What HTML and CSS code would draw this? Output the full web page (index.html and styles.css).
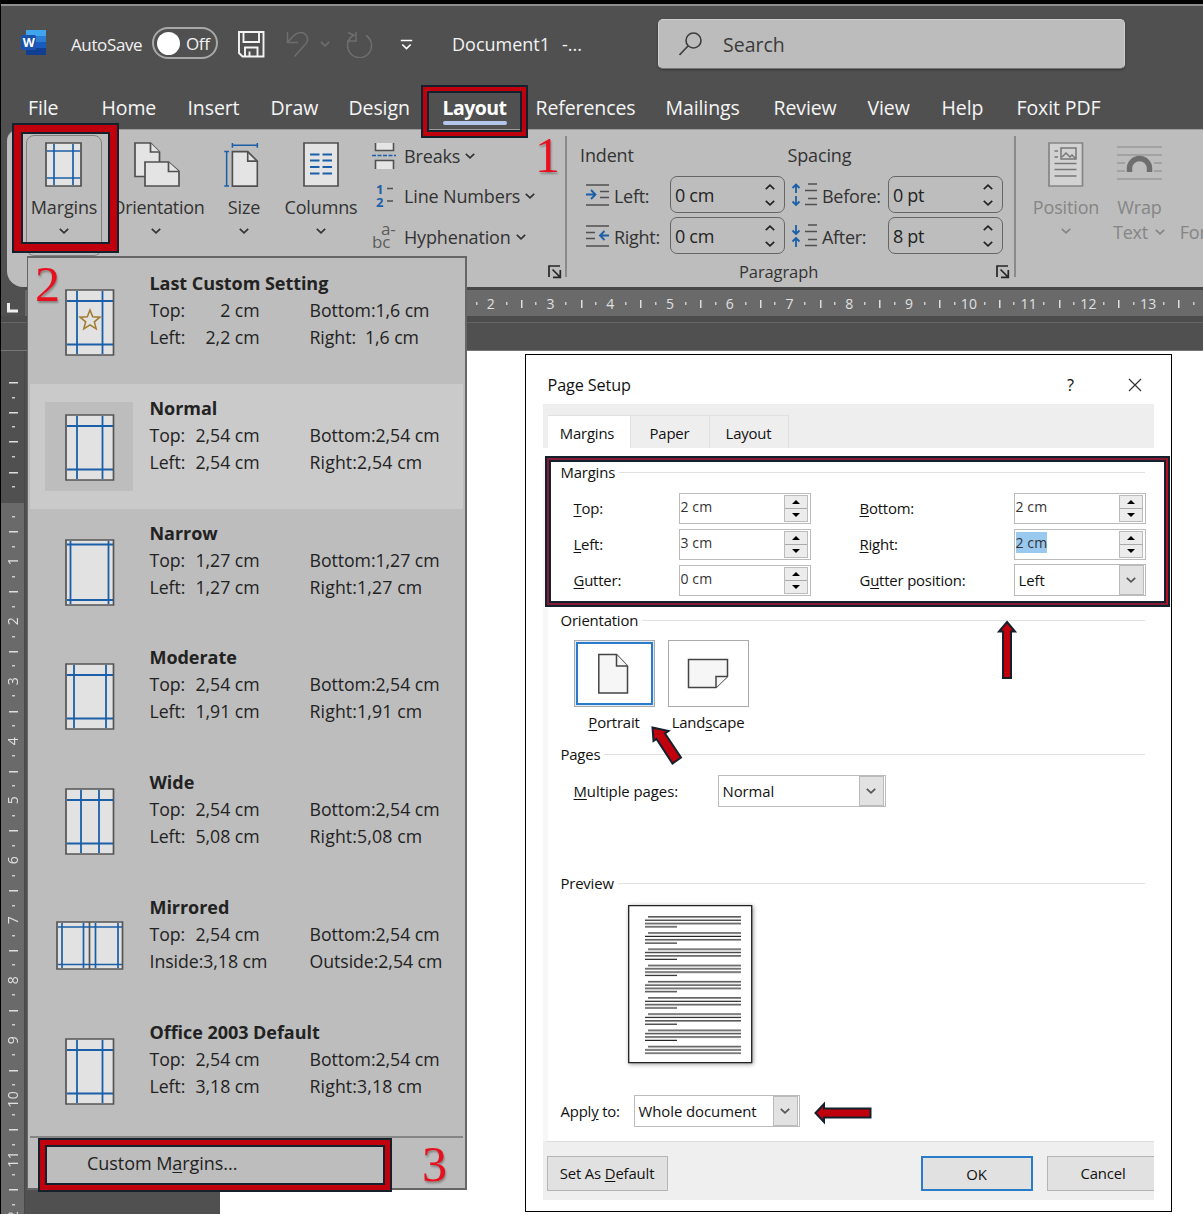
FILE: index.html
```html
<!DOCTYPE html>
<html lang="en">
<head>
<meta charset="utf-8">
<title>Document1 - Word</title>
<link rel="stylesheet" href="styles.css">
</head>
<body>
<svg class="defs" width="0" height="0">
  <defs>
    <symbol id="chev" viewBox="0 0 12 8"><path d="M1.8 1.8 6 5.8l4.200-4" fill="none" stroke="currentColor" stroke-width="1.7"/></symbol>
    <symbol id="up" viewBox="0 0 12 8"><path d="M1.800 6.200 6 2.200l4.200 4" fill="none" stroke="currentColor" stroke-width="1.700"/></symbol>
    <symbol id="launch" viewBox="0 0 14 14"><path d="M1 12V1h11M4.500 4.500 12 12M12.300 5v7.300H5" fill="none" stroke="#262626" stroke-width="1.700"/></symbol>
    <symbol id="standard" viewBox="0 0 50 67"><path d="M1 1h47.500v65H1z" fill="#e2e2e2" stroke="#555" stroke-width="1.700"/><path d="M12 2v63M37.500 2v63M2 12h46M2 55.500h46" stroke="#1a5fa8" stroke-width="1.800"/></symbol>
  </defs>
</svg>
<div class="app">
  <header class="titlebar">
    <svg class="word" width="28" height="28" viewBox="0 0 28 28"><path d="M5 1h20v7H5z" fill="#41a5ee"/><path d="M5 7h20v7H5z" fill="#2b7cd3"/><path d="M5 13h20v7H5z" fill="#185abd"/><path d="M5 19h20v7H5z" fill="#103f91"/><rect x="0" y="6" width="15" height="15" rx="1.500" fill="#1a52b0"/><text x="7.500" y="18" text-anchor="middle" class="w">W</text></svg>
    <span class="autosave">AutoSave</span>
    <span class="toggle"><i></i>Off</span>
    <svg width="28" height="28" viewBox="0 0 28 28" fill="none" stroke="#f4f4f4" stroke-width="1.900"><path d="M1 2h24.500v24.500H4.500L1 23zM5.500 2.500V12H21V2.500M7 26.500v-9h12.500v9M11.500 26.500v-5"/></svg>
    <svg width="26" height="28" viewBox="0 0 26 28" fill="none" stroke="#6e6e6e" stroke-width="1.500"><path d="M1.500 2v10.500H12M1.500 12.500C7 6 10 2.500 14.500 2.500c6 0 9 6.500 5.500 11L8.500 26.500"/></svg>
    <svg class="dim" width="12" height="8"><use href="#chev"/></svg>
    <svg width="28" height="28" viewBox="0 0 28 28" fill="none" stroke="#6e6e6e" stroke-width="1.500"><path d="M9 2v9H0M19 5.500a12 12 0 1 1-12-.500L1 2.500"/></svg>
    <svg width="13" height="13" viewBox="0 0 13 13" fill="none" stroke="#fff" stroke-width="1.700"><path d="M.8 2.500h11.400M2.300 6.500 6.500 10.500l4.200-4"/></svg>
    <span class="doc">Document1</span>
    <span class="doc2">-...</span>
    <div class="search">
      <svg width="26" height="26" viewBox="0 0 26 26" fill="none" stroke="#3c3c3c" stroke-width="1.600"><circle cx="14.500" cy="9.500" r="7.500"/><path d="m9 15-8.500 9"/></svg>
      <span>Search</span>
    </div>
  </header>
  <nav class="tabs">
    <span>File</span><span>Home</span><span>Insert</span><span>Draw</span><span>Design</span><b>Layout</b><span>References</span><span>Mailings</span><span>Review</span><span>View</span><span>Help</span><span>Foxit PDF</span>
  </nav>

  <section class="ribbon">
    <div class="big margins">
      <svg width="38" height="46" viewBox="0 0 38 46"><path d="M1 1h35v43H1z" fill="#e4e4e4" stroke="#505050" stroke-width="1.700"/><path d="M9 2v41M28 2v41M2 9h33M2 36h33" stroke="#1a5fa8" stroke-width="1.700"/></svg>
      <span>Margins</span><svg class="cv" width="12" height="8"><use href="#chev"/></svg>
    </div>
    <div class="big orient">
      <svg width="46" height="46" viewBox="0 0 46 46" fill="#e4e4e4" stroke="#505050" stroke-width="1.700"><path d="M1 1h15.500l9 9v24.500H1z"/><path d="M16.500 1v9h9"/><path d="M11 20h23.500L45 29.500V44H11z"/><path d="M34.500 20v9.500H45"/></svg>
      <span>Orientation</span><svg class="cv" width="12" height="8"><use href="#chev"/></svg>
    </div>
    <div class="big size">
      <svg width="37" height="48" viewBox="0 0 37 48"><path d="M9 10h16l10 10v26H9z" fill="#e4e4e4" stroke="#505050" stroke-width="1.700"/><path d="M25 10v10h10" fill="none" stroke="#505050" stroke-width="1.700"/><path d="M9 3.500h26M9 1v5M35 1v5M3 10v36M.5 10h5M.5 46h5" stroke="#1a5fa8" stroke-width="1.600" fill="none"/></svg>
      <span>Size</span><svg class="cv" width="12" height="8"><use href="#chev"/></svg>
    </div>
    <div class="big cols">
      <svg width="36" height="46" viewBox="0 0 36 46"><path d="M1 1h34v43H1z" fill="#e4e4e4" stroke="#505050" stroke-width="1.700"/><path d="M7 12.500h9.500m3 0H29M7 18.500h9.500m3 0H29M7 25h9.500m3 0H29M7 31.500h9.500m3 0H29" stroke="#1a5fa8" stroke-width="1.800"/></svg>
      <span>Columns</span><svg class="cv" width="12" height="8"><use href="#chev"/></svg>
    </div>
    <div class="smalls">
      <div><svg width="25" height="26" viewBox="0 0 25 26"><path d="M3.500 0v7.500h18V0M3.500 26v-8.500h18V26" fill="#e4e4e4" stroke="#505050" stroke-width="1.600"/><path d="M0 12.500h24" stroke="#1a5fa8" stroke-width="1.600" stroke-dasharray="4 1.500"/></svg><span>Breaks</span><svg class="cv" width="12" height="8"><use href="#chev"/></svg></div>
      <div><svg width="25" height="26" viewBox="0 0 25 26"><text x="4" y="11" class="num">1</text><text x="4" y="24" class="num">2</text><path d="M15 5.500h6M15 18h6" stroke="#505050" stroke-width="1.500"/></svg><span>Line Numbers</span><svg class="cv" width="12" height="8"><use href="#chev"/></svg></div>
      <div><svg width="25" height="28" viewBox="0 0 25 28"><text x="9" y="12" class="abc">a-</text><text x="0" y="25" class="abc">bc</text></svg><span>Hyphenation</span><svg class="cv" width="12" height="8"><use href="#chev"/></svg></div>
      <svg class="corner" width="14" height="14"><use href="#launch"/></svg>
    </div>
    <div class="para">
      <div class="prow head"><span>Indent</span><span class="sp">Spacing</span></div>
      <div class="prow">
        <svg width="24" height="22" viewBox="0 0 24 22"><path d="M0 1h23M14 7.500h9M14 13.500h9M0 21h23" stroke="#505050" stroke-width="1.500"/><path d="M0 10.500h9M5 6l4.500 4.500L5 15" stroke="#1a5fa8" stroke-width="1.800" fill="none"/></svg>
        <label>Left:</label><div class="spin">0 cm<i><svg width="12" height="8"><use href="#up"/></svg><svg width="12" height="8"><use href="#chev"/></svg></i></div>
        <svg class="s2" width="28" height="24" viewBox="0 0 28 24"><path d="M5 10V1M1.500 5 5 1.500 8.500 5M5 13v9M1.500 18.500 5 22l3.500-3.500" stroke="#1a5fa8" stroke-width="1.800" fill="none"/><path d="M17 1h9M14 7.500h12M17 15.500h9M14 21.500h12" stroke="#505050" stroke-width="1.500"/></svg>
        <label class="l2">Before:</label><div class="spin">0 pt<i><svg width="12" height="8"><use href="#up"/></svg><svg width="12" height="8"><use href="#chev"/></svg></i></div>
      </div>
      <div class="prow">
        <svg width="24" height="22" viewBox="0 0 24 22"><path d="M0 1h23M0 7.500h9M0 13.500h9M0 21h23" stroke="#505050" stroke-width="1.500"/><path d="M23 10.500h-9M18.500 6 14 10.500l4.500 4.500" stroke="#1a5fa8" stroke-width="1.800" fill="none"/></svg>
        <label>Right:</label><div class="spin">0 cm<i><svg width="12" height="8"><use href="#up"/></svg><svg width="12" height="8"><use href="#chev"/></svg></i></div>
        <svg class="s2" width="28" height="24" viewBox="0 0 28 24"><path d="M5 1v9M1.500 6.500 5 10l3.500-3.500M5 23v-9M1.500 17.500 5 14l3.500 3.500" stroke="#1a5fa8" stroke-width="1.800" fill="none"/><path d="M17 1h9M14 7.500h12M17 15.500h9M14 21.500h12" stroke="#505050" stroke-width="1.500"/></svg>
        <label class="l2">After:</label><div class="spin">8 pt<i><svg width="12" height="8"><use href="#up"/></svg><svg width="12" height="8"><use href="#chev"/></svg></i></div>
      </div>
      <div class="caption"><span>Paragraph</span><svg width="14" height="14"><use href="#launch"/></svg></div>
    </div>
    <div class="big off pos">
      <svg width="36" height="46" viewBox="0 0 36 46"><path d="M1 1h33.500v43H1z" fill="#d2d2d2" stroke="#858585" stroke-width="1.700"/><path d="M13 6h15v11H13zM14 15l4-4 4 4 2-2 3 3M6.500 9H10M6.500 15H10M6.500 21.500h22M6.500 27.500h22M6.500 34h22" fill="none" stroke="#777" stroke-width="1.500"/></svg>
      <span>Position</span><svg class="cv" width="12" height="8"><use href="#chev"/></svg>
    </div>
    <div class="big off wrap">
      <svg width="46" height="46" viewBox="0 0 46 46"><path d="M0 5h45M0 13h45M0 21h8M37 21h8M0 29h8M37 29h8M0 37h45" stroke="#999" stroke-width="1.500"/><path d="M12.500 30v-3.500a10 10 0 0 1 20 0V30" fill="#bdbdbd" stroke="#6e6e6e" stroke-width="5.500"/></svg>
      <span>Wrap</span><span class="ln2">Text <svg width="12" height="8"><use href="#chev"/></svg></span>
    </div>
    <div class="big off fwd">
      <svg width="20" height="46" viewBox="0 0 20 46"><path d="M1 1h18v30H1z" fill="#c8c8c8" stroke="#999" stroke-width="1.500"/></svg>
      <span class="bring">Bring</span><span class="ln2">Forward</span>
    </div>
  </section>

  <div class="hruler"><i>2</i><i>3</i><i>4</i><i>5</i><i>6</i><i>7</i><i>8</i><i>9</i><i>10</i><i>11</i><i>12</i><i>13</i><i></i></div>
  <div class="strip"></div>
  <main class="work">
    <div class="vruler"><i class="neg part"></i><i class="neg"></i><i class="zero"></i><i><u>1</u></i><i><u>2</u></i><i><u>3</u></i><i><u>4</u></i><i><u>5</u></i><i><u>6</u></i><i><u>7</u></i><i><u>8</u></i><i><u>9</u></i><i><u>10</u></i><i><u>11</u></i><i><u>12</u></i></div>
    <div class="canvas"></div>
    <div class="sheet"></div>
  </main>

  <svg class="tabstop" width="12" height="12" viewBox="0 0 12 12"><path d="M2.500 0v8H12" fill="none" stroke="#eee" stroke-width="3"/></svg>

  <div class="menu">
    <div class="item"><svg class="ic" width="50" height="67" viewBox="0 0 50 67"><use href="#standard"/><path d="m25 21 2.700 6.800 7.300.400-5.700 4.600 1.900 7.100-6.200-4-6.200 4 1.900-7.100-5.700-4.600 7.300-.400z" fill="none" stroke="#a07a2c" stroke-width="1.500"/></svg>
      <h4>Last Custom Setting</h4><p><span>Top:</span><span>2 cm</span></p><p>Bottom:1,6 cm</p><p><span>Left:</span><span>2,2 cm</span></p><p>Right:<em>1,6 cm</em></p></div>
    <div class="item on"><svg class="ic" width="50" height="67"><use href="#standard"/></svg>
      <h4>Normal</h4><p><span>Top:</span><span>2,54 cm</span></p><p>Bottom:2,54 cm</p><p><span>Left:</span><span>2,54 cm</span></p><p class="r">Right:2,54 cm</p></div>
    <div class="item"><svg class="ic" width="50" height="67" viewBox="0 0 50 67"><path d="M1 1h47.500v65H1z" fill="#e2e2e2" stroke="#555" stroke-width="1.700"/><path d="M5.500 2v63M43.500 2v63M2 5.500h46M2 61h46" stroke="#1a5fa8" stroke-width="1.800"/></svg>
      <h4>Narrow</h4><p><span>Top:</span><span>1,27 cm</span></p><p>Bottom:1,27 cm</p><p><span>Left:</span><span>1,27 cm</span></p><p class="r">Right:1,27 cm</p></div>
    <div class="item"><svg class="ic" width="50" height="67" viewBox="0 0 50 67"><path d="M1 1h47.500v65H1z" fill="#e2e2e2" stroke="#555" stroke-width="1.700"/><path d="M9 2v63M41 2v63M2 12h46M2 55.500h46" stroke="#1a5fa8" stroke-width="1.800"/></svg>
      <h4>Moderate</h4><p><span>Top:</span><span>2,54 cm</span></p><p>Bottom:2,54 cm</p><p><span>Left:</span><span>1,91 cm</span></p><p class="r">Right:1,91 cm</p></div>
    <div class="item"><svg class="ic" width="50" height="67" viewBox="0 0 50 67"><path d="M1 1h47.500v65H1z" fill="#e2e2e2" stroke="#555" stroke-width="1.700"/><path d="M16 2v63M34 2v63M2 12h46M2 55.500h46" stroke="#1a5fa8" stroke-width="1.800"/></svg>
      <h4>Wide</h4><p><span>Top:</span><span>2,54 cm</span></p><p>Bottom:2,54 cm</p><p><span>Left:</span><span>5,08 cm</span></p><p class="r">Right:5,08 cm</p></div>
    <div class="item"><svg class="ic wide" width="68" height="49" viewBox="0 0 68 49"><path d="M1 1h65.500v47H1zM33.500 1v47" fill="#e2e2e2" stroke="#555" stroke-width="1.700"/><path d="M6 2v45M27.500 2v45M39.500 2v45M62 2v45M2 6h64M2 43.500h64" stroke="#1a5fa8" stroke-width="1.700"/></svg>
      <h4>Mirrored</h4><p><span>Top:</span><span>2,54 cm</span></p><p>Bottom:2,54 cm</p><p>Inside:3,18 cm</p><p>Outside:2,54 cm</p></div>
    <div class="item"><svg class="ic" width="50" height="67"><use href="#standard"/></svg>
      <h4>Office 2003 Default</h4><p><span>Top:</span><span>2,54 cm</span></p><p>Bottom:2,54 cm</p><p><span>Left:</span><span>3,18 cm</span></p><p class="r">Right:3,18 cm</p></div>
    <div class="custom">Custom M<u>a</u>rgins...</div>
  </div>

  <div class="dialog">
    <div class="dtitle"><span>Page Setup</span><span class="q">?</span><svg width="14" height="14" viewBox="0 0 14 14"><path d="m1 1 12 12M13 1 1 13" stroke="#333" stroke-width="1.200"/></svg></div>
    <div class="dtabs"><b>Margins</b><span>Paper</span><span>Layout</span></div>
    <div class="dbody">
      <div class="legend">Margins</div>
      <div class="fields">
        <label><u>T</u>op:</label><div class="dspin"><span>2 cm</span><i></i></div>
        <label><u>B</u>ottom:</label><div class="dspin"><span>2 cm</span><i></i></div>
        <label><u>L</u>eft:</label><div class="dspin"><span>3 cm</span><i></i></div>
        <label><u>R</u>ight:</label><div class="dspin"><span class="sel">2 cm</span><i></i></div>
        <label><u>G</u>utter:</label><div class="dspin"><span>0 cm</span><i></i></div>
        <label>G<u>u</u>tter position:</label><div class="select"><span>Left</span><i><svg width="12" height="8"><use href="#chev"/></svg></i></div>
      </div>
      <div class="legend">Orientation</div>
      <div class="orients">
        <figure><div class="obox picked"><svg width="32" height="42" viewBox="0 0 32 42" fill="#f6f6f6" stroke="#444" stroke-width="1.500"><path d="M.8 1.500H18.500L29.500 13v27H.8z"/><path d="M18.500 1.500V13h11"/></svg></div><figcaption><u>P</u>ortrait</figcaption></figure>
        <figure><div class="obox"><svg width="42" height="31" viewBox="0 0 42 31" fill="#f6f6f6" stroke="#444" stroke-width="1.500"><path d="M1.500 1.500h39v17L29 29.500H1.500z"/><path d="M29 29.500v-11h11.500"/></svg></div><figcaption>Land<u>s</u>cape</figcaption></figure>
      </div>
      <div class="legend">Pages</div>
      <div class="row multi"><label><u>M</u>ultiple pages:</label><div class="select"><span>Normal</span><i><svg width="12" height="8"><use href="#chev"/></svg></i></div></div>
      <div class="legend">Preview</div>
      <svg class="preview" width="125" height="159" viewBox="0 0 125 159"><defs><pattern id="lines" x="0" y="11" width="125" height="16.220" patternUnits="userSpaceOnUse"><path d="M20 .8h93M17 4.200h96M17 7.500h96M17 10.900h32" stroke="#222" stroke-width="1.200"/></pattern></defs><path d="M.700.700h123v157H.700z" fill="#fff" stroke="#222" stroke-width="1.300"/><path d="M10 11h110v138.500H10z" fill="url(#lines)"/></svg>
      <div class="row apply"><label>Appl<u>y</u> to:</label><div class="select"><span>Whole document</span><i><svg width="12" height="8"><use href="#chev"/></svg></i></div></div>
    </div>
    <div class="dfoot"><span class="btn">Set As <u>D</u>efault</span><span class="btn ok">OK</span><span class="btn cancel">Cancel</span></div>
  </div>

  <div class="frame f1"></div><div class="frame f2"></div><div class="frame f3"></div><div class="frame f4"></div>
  <span class="step s1">1</span><span class="step s2n">2</span><span class="step s3">3</span>
  <svg class="arrow a1" width="22" height="60" viewBox="0 0 22 60"><path d="m11 2 8 9.500h-4V58H7V11.500H3z"/></svg>
  <svg class="arrow a2" width="34" height="42" viewBox="0 0 34 42"><path d="m2.500 2.500 16 3.500-3.500 2.500 16 24-8.500 6-16-24.500-3 2z"/></svg>
  <svg class="arrow a3" width="60" height="26" viewBox="0 0 60 26"><path d="M2.500 13 11 4v4.500h46.500v9H11V22z"/></svg>
</div>
</body>
</html>
```
FILE: styles.css
```css
* { box-sizing: border-box; }
body { margin: 0; background: #fff; font-family: "Open Sans", "Noto Sans", sans-serif; }
.defs { position: absolute; }
svg { display: block; flex: none; }
i { font-style: normal; }
.app { position: relative; width: 1203px; height: 1214px; overflow: hidden; border-top: 4px solid #000; border-left: 1px solid #000; background: #505050; white-space: nowrap; }

.titlebar { height: 78px; border-top: 2px solid #8d8d8d; display: grid; grid-template-columns: 50px 81px 86px 48px 33px 28px 53px 52px 110px 96px 467px; padding-left: 20px; align-items: center; color: #f2f2f2; font-size: 17px; letter-spacing: -0.380px; }
.titlebar > .toggle, .titlebar > .word { position: relative; top: -1px; }
.word .w { font: bold 12.500px "Open Sans", sans-serif; fill: #fff; }
.dim { color: #6e6e6e; }
.toggle { display: flex; align-items: center; gap: 6px; width: 66px; height: 32px; border: 2px solid #a8a8a8; border-radius: 16px; padding-left: 3px; font-size: 17px; }
.toggle i { width: 23px; height: 23px; border-radius: 50%; background: #fff; }
.doc, .doc2 { font-size: 18px; letter-spacing: 0; }
.search { height: 50px; background: #bcbcbc; border: 1px solid #cfcfcf; border-bottom-color: #777; border-radius: 5px; display: flex; align-items: center; gap: 18px; padding-left: 20px; font-size: 19.500px; letter-spacing: 0; color: #3a3a3a; box-shadow: 0 1px 2px #333; }

.tabs { height: 47px; display: grid; grid-template-columns: 73.500px 86px 83px 78px 94px 93px 130px 108px 94px 74px 75px auto; padding-left: 27px; align-items: center; color: #f5f5f5; font-size: 19.500px; letter-spacing: -0.100px; padding-top: 3px; }
.tabs b { position: relative; color: #fff; letter-spacing: -0.550px; }
.tabs b::after { content: ""; position: absolute; left: 0; bottom: -4px; width: 64px; height: 4px; border-radius: 2px; background: #b4c6ea; }

.ribbon { margin-left: 6px; height: 158px; background: #bdbdbd; border-top: 1px solid #999; border-radius: 12px 0 0 16px; display: flex; color: #333; font-size: 18px; letter-spacing: -0.150px; overflow: hidden; }
.big { flex: none; display: flex; flex-direction: column; align-items: center; padding-top: 12px; position: relative; }
.big > svg:first-child { height: 46px; }
.big > span { height: 24px; line-height: 24px; margin-top: 7px; }
.big .cv { margin-top: 8px; color: #333; }
.margins { width: 76px; margin: 5px 0 0 19px; height: 121px; padding-top: 6px; border: 1.500px solid #808080; border-radius: 8px; }
.orient { width: 107px; }
.orient > svg:first-child { margin-left: 3px; }
.orient span { margin-left: 5px; letter-spacing: -0.300px; }
.size { width: 70px; }
.size > svg:first-child { margin-right: 6px; }
.cols { width: 84px; }
.smalls { flex: none; width: 204px; padding: 0 0 0 9px; position: relative; border-right: 2px solid #8a8a8a; margin: 6px 0 10px; }
.smalls > div { height: 41px; display: flex; align-items: center; gap: 7px; }
.smalls > div:first-child { height: 39px; }
.smalls .cv { margin-left: -3px; }
.corner { position: absolute; right: 3px; bottom: -2px; }
.smalls svg { overflow: visible; }
.num { font: bold 13px "Open Sans", sans-serif; fill: #1a5fa8; }
.abc { font: 17px "Open Sans", sans-serif; fill: #5c5c5c; }
.para { flex: none; width: 449px; margin: 6px 0 10px; border-right: 2px solid #8a8a8a; padding-left: 13px; }
.prow { height: 41px; display: flex; align-items: center; padding-left: 6px; }
.prow.head { height: 38px; padding-left: 0; }
.head span { width: 207.500px; }
.prow label { width: 56px; margin-left: 4px; letter-spacing: -0.300px; padding-top: 2px; }
.prow .s2 { margin-left: 6px; }
.prow .l2 { width: 66px; margin-left: 3px; }
.spin { width: 115px; height: 37px; border: 1.500px solid #666; border-radius: 7px; padding: 0 8px 0 4px; display: flex; align-items: center; justify-content: space-between; color: #222; letter-spacing: -0.300px; }
.spin i { display: flex; flex-direction: column; gap: 8px; }
.caption { display: flex; justify-content: space-between; font-size: 16.500px; letter-spacing: -0.100px; padding: 4px 4px 0 159px; align-items: center; }
.off { color: #858585; }
.off .cv { color: #858585; }
.pos { width: 100px; }
.wrap { width: 47px; }
.big .ln2 { margin-top: 1px; display: flex; gap: 6px; align-items: center; }
.fwd { width: 70px; margin-left: 15px; }
.fwd span { margin-left: 2px; }
.fwd .bring { margin-left: 22px; }

.hruler { height: 29px; border-top: 3px solid #484848; background: #6a6a6a; margin-left: 24px; padding-left: 436px; display: flex; overflow: hidden; }
.hruler i { flex: none; width: 59.780px; text-align: center; color: #e0e0e0; font-size: 14px; line-height: 28px; letter-spacing: 0.300px;
  background: linear-gradient(#ddd,#ddd) 0 10px/1.500px 8px no-repeat, linear-gradient(#ccc,#ccc) 14.500px 12px/1.500px 3px no-repeat, linear-gradient(#ccc,#ccc) 44.500px 12px/1.500px 3px no-repeat; }
.strip { height: 35px; border-bottom: 1px solid #777; background: linear-gradient(#4c4c4c 0 6px, #656565 6px 7px, #505050 7px); }
.work { height: 863px; display: flex; background: #505050; }
.vruler { width: 24px; background: linear-gradient(#505050 0 152px, #6a6a6a 152px); display: flex; flex-direction: column; overflow: hidden; padding-top: 1px; border-right: 1px solid #484848; }
.vruler i { flex: none; height: 59.800px; display: flex; align-items: center; justify-content: center;
  background: linear-gradient(#ddd,#ddd) 8px 0/9px 1.500px no-repeat, linear-gradient(#ccc,#ccc) 11px 14.500px/3px 1.500px no-repeat, linear-gradient(#ccc,#ccc) 11px 44.500px/3px 1.500px no-repeat; }
.vruler .neg { background: linear-gradient(#ddd,#ddd) 8px 0/9px 1.500px no-repeat, linear-gradient(#ccc,#ccc) 11px 14.500px/3px 1.500px no-repeat, linear-gradient(#ccc,#ccc) 11px 44.500px/3px 1.500px no-repeat, linear-gradient(#ddd,#ddd) 8px 29.500px/9px 1.500px no-repeat; }
.vruler .part { background-size: 0 0, 0 0, 3px 1.500px, 9px 1.500px; }
.vruler u { writing-mode: vertical-rl; transform: rotate(180deg); text-decoration: none; font-size: 14px; color: #e0e0e0; line-height: 22px; letter-spacing: 0.300px; }
.canvas { width: 195px; }
.sheet { flex: 1; background: #fff; }
.tabstop { position: absolute; left: 5px; top: 299px; }

.menu { position: absolute; left: 26px; top: 252px; width: 440px; height: 934px; background: #bdbdbd; border: 2px solid #666; border-left-width: 1px; padding-top: 1.500px; color: #222; font-size: 17.700px; letter-spacing: -0.050px; }
.item { height: 124.800px; margin: 0 2px; padding: 10px 0 0 119.500px; display: grid; grid-template-columns: 160px auto; grid-template-rows: 27px 27px 27px; position: relative; align-items: center; }
.item.on { background: #cacaca; }
.item.on::before { content: ""; position: absolute; left: 15px; top: 18px; width: 88px; height: 89px; background: #bdbdbd; }
.ic { position: absolute; left: 35px; top: 29.500px; }
.ic.wide { left: 26px; top: 38px; }
.item h4 { margin: 0; grid-column: 1 / 3; font-size: 18px; letter-spacing: -0.050px; }
.item p { margin: 0; }
.item p:nth-of-type(odd) { width: 110px; display: flex; justify-content: space-between; }
.item .r { letter-spacing: 0.130px; }
.item em { font-style: normal; margin-left: 9px; }
.custom { border-top: 2px solid #858585; margin: 3px 2px 0; height: 53px; padding-left: 57px; line-height: 50px; font-size: 18px; }
.custom u, .dialog u { text-decoration-thickness: 1px; text-underline-offset: 2px; }

.dialog { position: absolute; left: 524px; top: 350px; width: 647px; height: 858px; border: 1.500px solid #000; background: #fff; color: #111; font-size: 14.900px; letter-spacing: -0.180px; padding-left: 16.500px; }
.dtitle { height: 49px; display: flex; align-items: center; padding: 10px 29px 0 5px; font-size: 16.200px; letter-spacing: -0.100px; }
.q { margin-left: auto; margin-right: 54px; }
.dtabs { width: 611px; height: 44px; background: #eee; display: flex; align-items: flex-end; padding-left: 5px; }
.dtabs > * { height: 33px; line-height: 34px; text-align: center; border: 1px solid #e0e0e0; border-bottom: 0; border-left: 0; font-weight: 400; width: 79px; }
.dtabs b { background: #fff; width: 83px; padding-right: 3px; }
.dbody { width: 611px; height: 680px; padding-left: 18px; border-left: 5px solid #f7f7f7; border-bottom: 1px solid #ddd; }
.legend { display: flex; align-items: center; height: 20px; gap: 4px; width: 584px; margin-left: -5px; }
.legend::after { content: ""; flex: 1; height: 1px; background: #e0e0e0; }
.dbody .legend:first-child { margin-top: 14px; }
.fields { display: grid; grid-template-columns: 105px 181px 154px 132px; grid-template-rows: 36px 36px 36px; margin: 8px 0 12px 8px; align-items: center; }
.dspin { width: 132px; height: 31px; border: 1.500px solid #bbb; padding: 2px; display: flex; justify-content: space-between; font-size: 14px; color: #333; line-height: 22px; }
.dspin span { height: 21px; letter-spacing: 0.100px; margin-left: -1px; }
.dspin i { width: 24px; height: 27px; margin-top: -1px; border: 1px solid #bbb; background: linear-gradient(#ececec 0 12px, #aaa 12px 13px, #ececec 13px); position: relative; }
.dspin .sel { background: #99c9ef; }
.dspin i::before, .dspin i::after { content: ""; position: absolute; left: 7px; top: 4px; border: 4px solid transparent; border-top: 0; border-bottom: 4px solid #000; }
.dspin i::after { top: 17px; border-bottom: 0; border-top: 4px solid #000; }
.select { width: 132px; height: 32px; border: 1.500px solid #bbb; display: flex; align-items: center; justify-content: space-between; padding: 0 1px 0 4px; letter-spacing: -0.050px; }
.select i { width: 25px; height: 30px; background: #e2e2e2; border: 1px solid #bbb; display: flex; align-items: center; justify-content: center; color: #555; }
.orients { display: flex; gap: 13px; margin: 10px 0 12px 8px; }
figure { margin: 0; width: 81px; text-align: center; }
.obox { height: 67px; border: 1.500px solid #aaa; display: flex; align-items: center; justify-content: center; }
.picked { box-shadow: inset 0 0 0 1px #dceafa, inset 0 0 0 3px #2a7bc8; }
figcaption { height: 20px; line-height: 20px; margin-top: 5px; }
.row { display: flex; align-items: center; }
.multi { margin: 11px 0 66px 8px; }
.multi label { width: 144px; letter-spacing: -0.050px; }
.multi .select { width: 168px; }
.preview { margin: 12px 0 31px 62px; filter: drop-shadow(1px 1px 2px #999); }
.apply { margin-left: -5px; }
.apply label { width: 73px; }
.apply .select { width: 166px; }
.dfoot { width: 611px; height: 58px; background: #efefef; display: flex; align-items: center; padding: 4px 0 0 4px; overflow: hidden; }
.btn { flex: none; width: 121px; height: 35px; line-height: 33px; text-align: center; background: #e1e1e1; border: 1.500px solid #b5b5b5; letter-spacing: -0.150px; }
.ok { width: 112px; margin-left: 253px; border: 2px solid #2a7bc8; }
.cancel { margin-left: 14px; width: 113px; }

.frame { position: absolute; border: 5px solid #c0000c; outline: 2px solid #14202c; outline-offset: -1px; box-shadow: inset 0 0 0 2px #14202c; }
.f1 { left: 421px; top: 82px; width: 105px; height: 51px; border-width: 5px; }
.f2 { left: 12px; top: 120px; width: 105px; height: 128px; border-width: 8px; }
.f3 { left: 38px; top: 1135px; width: 352px; height: 52px; border-width: 6px; }
.f4 { left: 545px; top: 453px; width: 623px; height: 149px; border: 3px solid #861b38; border-right-color: #b01020; }
.step { position: absolute; font: 50px/50px "Liberation Serif", serif; color: #e8101e; text-shadow: 1px 2px 2px rgba(0,0,0,.3); }
.s1 { left: 534px; top: 126px; }
.s2n { left: 34px; top: 255px; }
.s3 { left: 421px; top: 1135px; }
.arrow { position: absolute; fill: #c0000c; stroke: #14202c; stroke-width: 2; }
.a1 { left: 995px; top: 616px; }
.a2 { left: 649px; top: 721px; }
.a3 { left: 812px; top: 1096px; }
```
